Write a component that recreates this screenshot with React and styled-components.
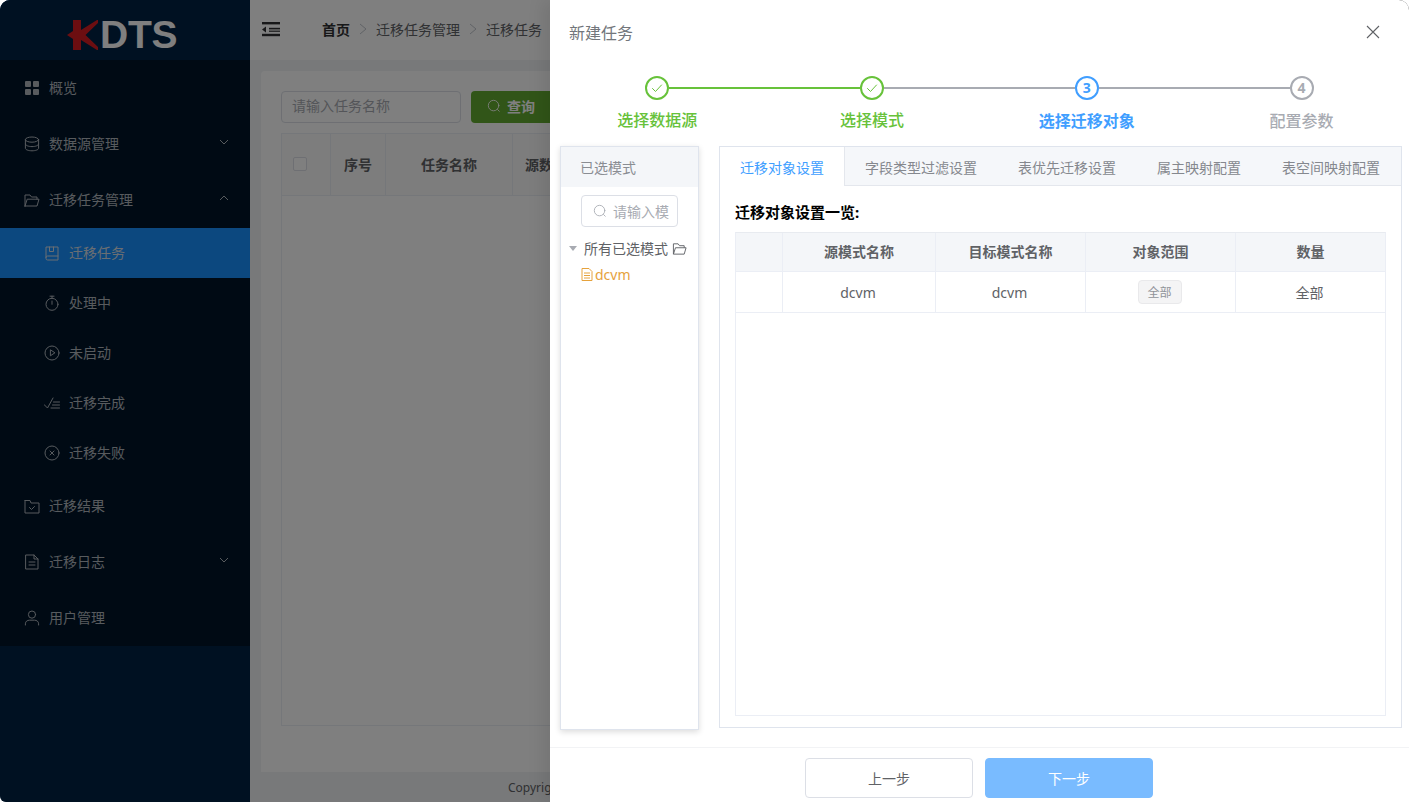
import React from "react";
import styled, { createGlobalStyle } from "styled-components";

const Global = createGlobalStyle`
  html, body { margin: 0; padding: 0; background: #fff; }
  body { font-family: "Noto Sans", "Noto Sans CJK SC", sans-serif; font-size: 14px; }
  * { box-sizing: border-box; }
`;

const Page = styled.div`
  position: relative; width: 1409px; height: 802px; overflow: hidden; display: flex;
  border-radius: 10px 10px 0 6px;
`;
const Sidebar = styled.aside`width: 250px; flex: none; background: #002244; display: flex; flex-direction: column;`;
const LogoBar = styled.div`height: 60px; display: flex; align-items: flex-start; padding: 20px 0 0 67px; background: #002244;`;
const LogoK = styled.svg`width: 31px; height: 30px; flex: none; display: block;`;
const LogoText = styled.span`font-family: "Liberation Sans", sans-serif; font-weight: 700; font-size: 39px; line-height: 30px; letter-spacing: -0.2px; color: #fff; margin-left: 2px;`;
const Menu = styled.nav`background: #001529;`;
const Item = styled.div`
  height: ${p => (p.$sub ? 50 : 56)}px; display: flex; align-items: center; gap: 9px;
  padding-left: ${p => (p.$sub ? 44 : 24)}px; padding-right: 20px;
  color: #b0b6bd; font-size: 14px; background: ${p => (p.$active ? "#1890ff" : "transparent")};
  ${p => p.$active && "color:#d5dde6;"}
  & > svg:first-child { width: 16px; height: 16px; flex: none; }
`;
const ItemLabel = styled.span`flex: 1; line-height: 20px;`;
const Chevron = styled.svg`width: 12px; height: 12px; flex: none; position: relative; top: -2px;`;

const Main = styled.main`flex: 1; min-width: 0; background: #f0f2f5; display: flex; flex-direction: column;`;
const TopBar = styled.header`height: 60px; flex: none; background: #fff; display: flex; align-items: center; padding: 0 0 2px 12px;`;
const Crumbs = styled.div`display: flex; align-items: center; margin-left: 42px; color: #606266; white-space: nowrap;`;
const CrumbHome = styled.span`font-weight: 700; color: #303133;`;
const CrumbSep = styled.span`width: 26px; display: flex; justify-content: center; color: #c0c4cc;`;
const SepIcon = styled.svg`width: 10px; height: 12px;`;
const Content = styled.div`flex: 1; min-height: 0; padding: 11px 0 0 11px;`;
const Card = styled.section`height: 100%; background: #fff; padding: 20px; border-radius: 4px 0 0 0; overflow: hidden;`;
const FilterRow = styled.div`display: flex; gap: 10px; width: 400px;`;
const FilterInput = styled.div`width: 180px; height: 32px; border: 1px solid #dcdfe6; border-radius: 4px; color: #a8abb2; padding: 0 10px; line-height: 28px;`;
const QueryBtn = styled.div`width: 110px; height: 32px; background: #62ab30; border-radius: 4px; color: #fff; display: flex; align-items: center; gap: 6px; padding: 0 0 2px 16px; font-weight: 700;`;
const BgTable = styled.div`margin-top: 10px; width: 900px; height: 593px; border: 1px solid #ebeef5;`;
const BgHead = styled.div`display: grid; grid-template-columns: 49px 55px 127px 1fr; height: 62px; border-bottom: 1px solid #ebeef5; background: #fafafa;`;
const BgHeadCell = styled.div`display: flex; align-items: center; justify-content: ${p => p.$left ? "flex-start" : "center"}; padding: 0 0 2px ${p => p.$left ? 12 : 0}px; border-right: 1px solid #ebeef5; color: #606266; font-weight: 700;`;
const Checkbox = styled.span`display: block; width: 14px; height: 14px; border: 1px solid #dcdfe6; border-radius: 2px; background: #fff; margin-left: -1px;`;
const Copyright = styled.footer`height: 30px; flex: none; background: #f0f2f5; color: #606266; font-size: 12px; line-height: 32px; padding-left: 258px; white-space: nowrap;`;

const Mask = styled.div`position: absolute; inset: 0; background: rgba(0,0,0,.5);`;
const Drawer = styled.div`
  position: absolute; top: 0; right: 0; bottom: 0; width: 859px; background: #fff;
  display: flex; flex-direction: column; border-top-right-radius: 10px;
  box-shadow: -8px 0 16px rgba(0,0,0,.08);
`;
const DrawerHead = styled.div`height: 64px; flex: none; display: flex; align-items: center; justify-content: space-between; padding: 0 29px 0 19px; color: #72767b; font-size: 16px;`;
const CloseIcon = styled.svg`width: 14px; height: 14px; color: #606266;`;
const Steps = styled.div`display: grid; grid-template-columns: repeat(4, 1fr); height: 82px; flex: none;`;
const Step = styled.div`
  position: relative; display: flex; flex-direction: column; align-items: center; padding-top: 12px;
  color: ${p => p.$color}; font-size: 16px;
  ${p => p.$line && `&::after { content: ""; position: absolute; top: 23px; left: calc(50% + 12px); width: calc(100% - 24px); height: 2px; background: ${p.$line}; }`}
`;
const StepDot = styled.span`width: 24px; height: 24px; border-radius: 50%; border: 2px solid currentColor; display: flex; align-items: center; justify-content: center; font-size: 14px; font-weight: 700; line-height: 1;`;
const StepLabel = styled.span`margin-top: ${p => p.$down ? 10 : 9}px; line-height: 22px; font-weight: ${p => p.$bold ? 600 : 500};`;

const Body = styled.div`flex: 1; min-height: 0; display: flex; align-items: flex-start; padding-left: 10px; gap: 20px;`;
const LeftPanel = styled.div`width: 139px; height: 584px; flex: none; border: 1px solid #dfe4ed; box-shadow: 0 2px 6px rgba(0,0,0,.14); background: #fff;`;
const LeftTitle = styled.div`height: 40px; background: #f4f6f9; color: #8a8d93; padding-left: 19px; line-height: 41px;`;
const LeftSearch = styled.div`margin: 8px 0 0 20px; width: 97px; height: 32px; border: 1px solid #dcdfe6; border-radius: 4px; display: flex; align-items: center; gap: 6px; padding-left: 11px; color: #a8abb2; white-space: nowrap; & > svg { flex: none; }`;
const TreeRoot = styled.div`margin-top: 8px; height: 26px; display: flex; align-items: center; color: #606266; white-space: nowrap; padding-left: 8px;`;
const TreeCaret = styled.span`width: 0; height: 0; border: 4px solid transparent; border-top: 5px solid #a8abb2; border-bottom: 0; margin-right: 7px;`;
const TreeFolder = styled.svg`width: 15px; height: 15px; margin-left: 4px; color: #606266;`;
const TreeLeaf = styled.div`height: 26px; display: flex; align-items: center; padding-left: 20px; color: #e6a23c; gap: 2px; font-size: 14px;`;
const LeafIcon = styled.svg`width: 12px; height: 13px; flex: none;`;

const RightPanel = styled.div`width: 683px; height: 582px; flex: none; border: 1px solid #dfe4ed; background: #fff; display: flex; flex-direction: column;`;
const Tabs = styled.div`height: 39px; flex: none; display: flex; background: #f5f7fa; border-bottom: 1px solid #e4e7ed;`;
const Tab = styled.div`
  height: ${p => p.$active ? 39 : 38}px; padding: 0 20px; line-height: 41px; white-space: nowrap;
  margin-right: 1px; color: ${p => p.$active ? "#409eff" : "#85888e"};
  background: ${p => p.$active ? "#fff" : "transparent"};
  ${p => p.$active && "border-right: 1px solid #e4e7ed; margin-right: 0;"}
`;
const TabBody = styled.div`flex: 1; min-height: 0; padding: 15px 15px 11px; display: flex; flex-direction: column;`;
const SectionTitle = styled.div`font-weight: 700; font-size: 15px; color: #000; line-height: 22px; margin-bottom: 9px;`;
const DataTable = styled.div`flex: 1; min-height: 0; border: 1px solid #ebeef5; border-top-color: #e8ebf0;`;
const TRow = styled.div`display: grid; grid-template-columns: 47px 153px 150px 150px 1fr; height: ${p => p.$head ? 39 : 41}px; border-bottom: 1px solid #ebeef5; background: ${p => p.$head ? "#f4f6f9" : "#fff"};`;
const TCell = styled.div`display: flex; align-items: center; justify-content: center; border-right: 1px solid #ebeef5; color: #606266; font-weight: ${p => p.$head ? 700 : 400}; padding: ${p => p.$head ? "0 0 3px" : "0 2px 0 0"}; &:last-child { border-right: 0; }`;
const Tag = styled.span`width: 44px; height: 24px; background: #f4f4f5; border: 1px solid #e9e9eb; border-radius: 4px; color: #909399; font-size: 12px; display: flex; align-items: center; justify-content: center;`;
const Footer = styled.div`height: 55px; flex: none; border-top: 1px solid #f2f3f5; display: flex; justify-content: center; gap: 12px; padding: 10px 1px 0 0;`;
const Btn = styled.div`width: 168px; height: 40px; border-radius: 4px; display: flex; align-items: center; justify-content: center; font-size: 14px; border: 1px solid ${p => p.$primary ? "#79bbff" : "#dcdfe6"}; background: ${p => p.$primary ? "#79bbff" : "#fff"}; color: ${p => p.$primary ? "#fff" : "#606266"};`;

const Ico = ({ children, size = 16, vb = "0 0 16 16" }) => (
  <svg width={size} height={size} viewBox={vb} fill="none" stroke="currentColor" strokeWidth="1" strokeLinecap="round" strokeLinejoin="round">{children}</svg>
);
const icons = {
  grid: <svg viewBox="0 0 16 16" fill="currentColor"><rect x="1" y="1" width="6" height="6" rx="1"/><rect x="9" y="1" width="6" height="6" rx="1"/><rect x="1" y="9" width="6" height="6" rx="1"/><rect x="9" y="9" width="6" height="6" rx="1"/></svg>,
  db: <Ico><ellipse cx="8" cy="3.6" rx="6.6" ry="2.6"/><path d="M1.4 3.6v8.6c0 1.5 3 2.6 6.6 2.6s6.6-1.1 6.6-2.6V3.6M1.4 8c0 1.5 3 2.6 6.6 2.6s6.6-1.1 6.6-2.6"/></Ico>,
  folder: <Ico><path d="M1 14V3h5l1.5 2H13v2.2M1 14h12l2-6.8H3.2L1 14z"/></Ico>,
  book: <Ico><path d="M2 12.6V2h12v13H3.6A1.6 1.6 0 0 1 2 13.4v-.8A1.6 1.6 0 0 1 3.6 11H14M5.5 2v4.5h4V2"/></Ico>,
  timer: <Ico><circle cx="8" cy="9.3" r="6"/><path d="M6 1.2h4M8 3.3V1.2M8 9.3V6"/></Ico>,
  play: <Ico><circle cx="8" cy="8" r="7"/><path d="M6.4 5.2v5.6L10.6 8z"/></Ico>,
  done: <Ico><path d="M0 9.5l3.5 3.5L9 3M9.5 7h6M8.5 10h7M7 13h8.5"/></Ico>,
  fail: <Ico><circle cx="8" cy="8" r="7"/><path d="M6 6l4 4M10 6l-4 4"/></Ico>,
  folderCheck: <Ico><path d="M1 3.5V15h14V5H7L6 2.5H1zM5.5 9.5L7.5 11.5l3-3"/></Ico>,
  doc: <Ico><path d="M2 1h8l4 4v10H2zM10 1v4h4M5 8h6M5 11h6"/></Ico>,
  user: <Ico><circle cx="8" cy="4.6" r="3.6"/><path d="M1.4 15v-1.2c0-2.4 2-3.6 4-3.6h5.2c2 0 4 1.2 4 3.6V15"/></Ico>,
};
const Chev = ({ up }) => (
  <Chevron viewBox="0 0 12 12" fill="none" stroke="currentColor"><path d={up ? "M2 8l4-4 4 4" : "M2 4l4 4 4-4"} /></Chevron>
);
const Search = ({ size = 14 }) => (
  <Ico size={size}><circle cx="7.5" cy="7.5" r="6"/><path d="M12 12l2 2"/></Ico>
);
const Check = () => <Ico size={12} vb="0 0 12 12"><path d="M1.5 6.5L4.5 9.5 10.5 3"/></Ico>;
const Sep = () => (
  <CrumbSep><SepIcon viewBox="0 0 10 12" fill="none" stroke="currentColor"><path d="M2 1l6 5-6 5" /></SepIcon></CrumbSep>
);

const menu = [
  { i: "grid", t: "概览" },
  { i: "db", t: "数据源管理", c: "down" },
  { i: "folder", t: "迁移任务管理", c: "up" },
  { i: "book", t: "迁移任务", sub: 1, active: 1 },
  { i: "timer", t: "处理中", sub: 1 },
  { i: "play", t: "未启动", sub: 1 },
  { i: "done", t: "迁移完成", sub: 1 },
  { i: "fail", t: "迁移失败", sub: 1 },
  { i: "folderCheck", t: "迁移结果" },
  { i: "doc", t: "迁移日志", c: "down" },
  { i: "user", t: "用户管理" },
];
const tabs = ["迁移对象设置", "字段类型过滤设置", "表优先迁移设置", "属主映射配置", "表空间映射配置"];

export default function App() {
  return (
    <>
      <Global />
      <Page>
        <Sidebar>
          <LogoBar>
            <LogoK viewBox="0 0 31 30"><path d="M6 0h8v10L30 0h1v3L18.5 15 31 27v3h-1L14 20v10H6V19L0 15l6-4z" fill="#d81c22"/></LogoK>
            <LogoText>DTS</LogoText>
          </LogoBar>
          <Menu>
            {menu.map(m => (
              <Item key={m.t} $sub={m.sub} $active={m.active}>
                {icons[m.i]}
                <ItemLabel>{m.t}</ItemLabel>
                {m.c && <Chev up={m.c === "up"} />}
              </Item>
            ))}
          </Menu>
        </Sidebar>
        <Main>
          <TopBar>
            <svg width="18" height="16" viewBox="0 0 18 16" fill="#303133"><rect y="1" width="18" height="2.4"/><rect x="7" y="6.8" width="11" height="1.6"/><rect x="7" y="9.6" width="11" height="1.2"/><path d="M0 8.4l4-3v6z"/><rect y="12.8" width="18" height="2.4"/></svg>
            <Crumbs>
              <CrumbHome>首页</CrumbHome><Sep />
              <span>迁移任务管理</span><Sep />
              <span>迁移任务</span>
            </Crumbs>
          </TopBar>
          <Content>
            <Card>
              <FilterRow>
                <FilterInput>请输入任务名称</FilterInput>
                <QueryBtn><Search />查询</QueryBtn>
              </FilterRow>
              <BgTable>
                <BgHead>
                  <BgHeadCell $left><Checkbox /></BgHeadCell>
                  <BgHeadCell>序号</BgHeadCell>
                  <BgHeadCell>任务名称</BgHeadCell>
                  <BgHeadCell $left>源数据源</BgHeadCell>
                </BgHead>
              </BgTable>
            </Card>
          </Content>
          <Copyright>Copyright</Copyright>
        </Main>
        <Mask />
        <Drawer>
          <DrawerHead>
            <span>新建任务</span>
            <CloseIcon viewBox="0 0 14 14" fill="none" stroke="currentColor" strokeWidth="1.1"><path d="M1 1l12 12M13 1L1 13" /></CloseIcon>
          </DrawerHead>
          <Steps>
            <Step $color="#67c23a" $line="#67c23a"><StepDot><Check /></StepDot><StepLabel>选择数据源</StepLabel></Step>
            <Step $color="#67c23a" $line="#a8abb2"><StepDot><Check /></StepDot><StepLabel>选择模式</StepLabel></Step>
            <Step $color="#409eff" $line="#a8abb2"><StepDot>3</StepDot><StepLabel $bold $down>选择迁移对象</StepLabel></Step>
            <Step $color="#a8abb2"><StepDot>4</StepDot><StepLabel $down>配置参数</StepLabel></Step>
          </Steps>
          <Body>
            <LeftPanel>
              <LeftTitle>已选模式</LeftTitle>
              <LeftSearch><Search />请输入模</LeftSearch>
              <TreeRoot>
                <TreeCaret />所有已选模式
                <TreeFolder viewBox="0 0 16 16" fill="none" stroke="currentColor"><path d="M1.5 14V3h5l1.5 2h5v2.2M1.5 14h11.5l2-6.8H3.7L1.5 14z" /></TreeFolder>
              </TreeRoot>
              <TreeLeaf>
                <LeafIcon viewBox="0 0 12 13" fill="none" stroke="currentColor"><path d="M1 .5h7l3 3v9H1zM3 5h6M3 7.5h6M3 10h6" /></LeafIcon>
                dcvm
              </TreeLeaf>
            </LeftPanel>
            <RightPanel>
              <Tabs>
                {tabs.map((t, i) => <Tab key={t} $active={i === 0}>{t}</Tab>)}
              </Tabs>
              <TabBody>
                <SectionTitle>迁移对象设置一览:</SectionTitle>
                <DataTable>
                  <TRow $head>
                    <TCell $head /><TCell $head>源模式名称</TCell><TCell $head>目标模式名称</TCell><TCell $head>对象范围</TCell><TCell $head>数量</TCell>
                  </TRow>
                  <TRow>
                    <TCell /><TCell>dcvm</TCell><TCell>dcvm</TCell><TCell><Tag>全部</Tag></TCell><TCell>全部</TCell>
                  </TRow>
                </DataTable>
              </TabBody>
            </RightPanel>
          </Body>
          <Footer>
            <Btn>上一步</Btn>
            <Btn $primary>下一步</Btn>
          </Footer>
        </Drawer>
      </Page>
    </>
  );
}
